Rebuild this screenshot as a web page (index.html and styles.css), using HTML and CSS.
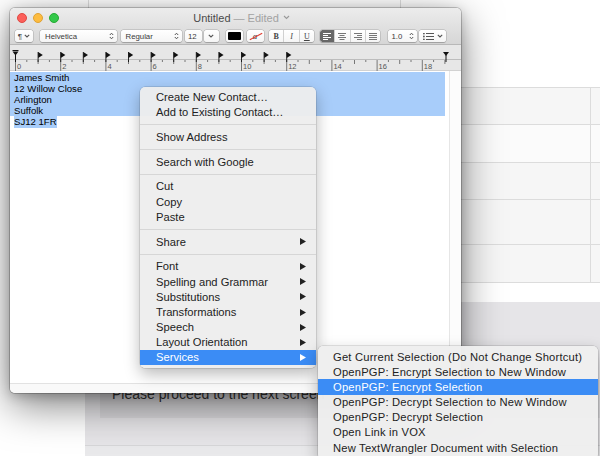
FILE: index.html
```html
<!DOCTYPE html>
<html>
<head>
<meta charset="utf-8">
<link rel="stylesheet" href="styles.css">
</head>
<body>
<div class="page">
  <div class="page-top"><div class="pt-a"></div><div class="pt-b"></div><div class="pt-c"></div></div>
  <div class="table">
    <div class="row h37 shade"><div class="cell"></div><div class="cell-end"></div></div>
    <div class="row h38"><div class="cell"></div><div class="cell-end"></div></div>
    <div class="row h37 shade"><div class="cell"></div><div class="cell-end"></div></div>
    <div class="row h45 shade"><div class="cell"></div><div class="cell-end"></div></div>
    <div class="row h38 shade"><div class="cell"></div><div class="cell-end"></div></div>
  </div>
  <div class="page-gap"></div>
  <div class="band">
    <div class="notice">Please proceed to the next screen</div>
    <div class="band-foot"></div>
  </div>
</div>

<div class="window">
  <div class="titlebar">
    <div class="title-row">
      <div class="lights"><span class="light red"></span><span class="light yellow"></span><span class="light green"></span></div>
      <div class="title">Untitled <span class="edited">— Edited</span> <svg class="tchev" width="7" height="5" viewBox="0 0 7 5"><path d="M1 1 L3.5 3.5 L6 1" fill="none" stroke="#9a9a9a" stroke-width="1.1"/></svg></div>
      <div></div>
    </div>
    <div class="toolbar">
      <div class="ctl para"><span class="pil">¶</span><svg width="6" height="4" viewBox="0 0 6 4"><path d="M0.8 0.8 L3 3 L5.2 0.8" fill="none" stroke="#555" stroke-width="1.1"/></svg></div>
      <div class="ctl popup font-pop"><span>Helvetica</span><svg width="5" height="8" viewBox="0 0 5 8"><path d="M0.8 3 L2.5 1.2 L4.2 3 M0.8 5 L2.5 6.8 L4.2 5" fill="none" stroke="#555" stroke-width="1"/></svg></div>
      <div class="ctl popup style-pop"><span>Regular</span><svg width="5" height="8" viewBox="0 0 5 8"><path d="M0.8 3 L2.5 1.2 L4.2 3 M0.8 5 L2.5 6.8 L4.2 5" fill="none" stroke="#555" stroke-width="1"/></svg></div>
      <div class="ctl size-field">12</div>
      <div class="ctl size-btn"><svg width="6" height="4" viewBox="0 0 6 4"><path d="M0.8 0.8 L3 3 L5.2 0.8" fill="none" stroke="#555" stroke-width="1.1"/></svg></div>
      <div class="ctl well"><span class="swatch"></span></div>
      <div class="ctl well hl"><span class="hl-a">a</span></div>
      <div class="ctl seg biu"><span class="sb">B</span><span class="si">I</span><span class="su">U</span></div>
      <div class="ctl seg align">
        <span class="on"><svg width="8" height="7" viewBox="0 0 8 7"><path d="M0 0.5 H8 M0 2.5 H5 M0 4.5 H8 M0 6.5 H5" stroke="#fff" stroke-width="1"/></svg></span>
        <span><svg width="8" height="7" viewBox="0 0 8 7"><path d="M0 0.5 H8 M1.5 2.5 H6.5 M0 4.5 H8 M1.5 6.5 H6.5" stroke="#777" stroke-width="1"/></svg></span>
        <span><svg width="8" height="7" viewBox="0 0 8 7"><path d="M0 0.5 H8 M3 2.5 H8 M0 4.5 H8 M3 6.5 H8" stroke="#777" stroke-width="1"/></svg></span>
        <span><svg width="8" height="7" viewBox="0 0 8 7"><path d="M0 0.5 H8 M0 2.5 H8 M0 4.5 H8 M0 6.5 H8" stroke="#777" stroke-width="1"/></svg></span>
      </div>
      <div class="ctl popup spacing"><span>1.0</span><svg width="5" height="8" viewBox="0 0 5 8"><path d="M0.8 3 L2.5 1.2 L4.2 3 M0.8 5 L2.5 6.8 L4.2 5" fill="none" stroke="#555" stroke-width="1"/></svg></div>
      <div class="ctl list-pop"><svg width="11" height="7" viewBox="0 0 11 7"><path d="M3 0.5 H11 M3 3.5 H11 M3 6.5 H11" stroke="#555" stroke-width="1"/><circle cx="0.9" cy="0.6" r="0.9" fill="#555"/><circle cx="0.9" cy="3.5" r="0.9" fill="#555"/><circle cx="0.9" cy="6.4" r="0.9" fill="#555"/></svg><svg width="6" height="4" viewBox="0 0 6 4"><path d="M0.8 0.8 L3 3 L5.2 0.8" fill="none" stroke="#555" stroke-width="1.1"/></svg></div>
    </div>
  </div>

  <svg class="ruler" width="451" height="26" viewBox="0 0 451 26">
    <rect x="0" y="0" width="451" height="26" fill="#e7e7e7"/>
    <line x1="0" y1="25.5" x2="451" y2="25.5" stroke="#d2d2d2"/>
    <line x1="0" y1="14.5" x2="451" y2="14.5" stroke="#bdbdbd"/>
    <g stroke="#777" stroke-width="1">
      <path d="M5.5 15 V26 M50.7 15 V26 M95.9 15 V26 M141.1 15 V26 M186.3 15 V26 M231.5 15 V26 M276.7 15 V26 M321.9 15 V26 M367.1 15 V26 M412.3 15 V26"/>
      <path d="M28.1 15 V19 M73.3 15 V19 M118.5 15 V19 M163.7 15 V19 M208.9 15 V19 M254.1 15 V19 M299.3 15 V19 M344.5 15 V19 M389.7 15 V19 M434.9 15 V19"/>
      <path d="M16.8 15 V17 M39.4 15 V17 M62 15 V17 M84.6 15 V17 M107.2 15 V17 M129.8 15 V17 M152.4 15 V17 M175 15 V17 M197.6 15 V17 M220.2 15 V17 M242.8 15 V17 M265.4 15 V17 M288 15 V17 M310.6 15 V17 M333.2 15 V17 M355.8 15 V17 M378.4 15 V17 M401 15 V17 M423.6 15 V17"/>
    </g>
    <g font-family="Liberation Sans, Arial, sans-serif" font-size="7.5" fill="#555">
      <text x="7" y="24">0</text><text x="52.2" y="24">2</text><text x="97.4" y="24">4</text><text x="142.6" y="24">6</text><text x="187.8" y="24">8</text><text x="233" y="24">10</text><text x="278.2" y="24">12</text><text x="323.4" y="24">14</text><text x="368.6" y="24">16</text><text x="413.8" y="24">18</text>
    </g>
    <g fill="#111" stroke="#111" stroke-width="1">
      <path d="M2.5 5.5 H8.5" />
      <polygon points="2.5,6.5 8.5,6.5 5.5,10.5" stroke="none"/>
      <path d="M5.5 10 V17"/>
      <polygon points="433,7 439,7 436,11" stroke="none"/>
      <path d="M436 10 V17"/>
    </g>
    <g fill="#111">
      <polygon points="28.1,7 32.8,10 28.1,13"/><polygon points="50.7,7 55.4,10 50.7,13"/><polygon points="73.3,7 78,10 73.3,13"/><polygon points="95.9,7 100.6,10 95.9,13"/><polygon points="118.5,7 123.2,10 118.5,13"/><polygon points="141.1,7 145.8,10 141.1,13"/><polygon points="163.7,7 168.4,10 163.7,13"/><polygon points="186.3,7 191,10 186.3,13"/><polygon points="208.9,7 213.6,10 208.9,13"/><polygon points="231.5,7 236.2,10 231.5,13"/><polygon points="254.1,7 258.8,10 254.1,13"/><polygon points="276.7,7 281.4,10 276.7,13"/>
    </g>
    <g stroke="#111" stroke-width="0.9">
      <path d="M28.1 7 V17 M50.7 7 V17 M73.3 7 V17 M95.9 7 V17 M118.5 7 V17 M141.1 7 V17 M163.7 7 V17 M186.3 7 V17 M208.9 7 V17 M231.5 7 V17 M254.1 7 V17 M276.7 7 V17"/>
    </g>
  </svg>

  <div class="content">
    <div class="doc">
      <div class="line full">James Smith</div>
      <div class="line full">12 Willow Close</div>
      <div class="line full">Arlington</div>
      <div class="line full">Suffolk</div>
      <div class="line"><span class="sel">SJ12 1FR</span></div>
    </div>
    <div class="gutter"></div>
  </div>
  <div class="hscroll"></div>
</div>

<div class="menu">
  <div class="mi">Create New Contact…</div>
  <div class="mi">Add to Existing Contact…</div>
  <div class="sep"></div>
  <div class="mi">Show Address</div>
  <div class="sep"></div>
  <div class="mi">Search with Google</div>
  <div class="sep"></div>
  <div class="mi">Cut</div>
  <div class="mi">Copy</div>
  <div class="mi">Paste</div>
  <div class="sep"></div>
  <div class="mi">Share<svg class="arr" width="6" height="7" viewBox="0 0 6 7"><polygon points="0,0 6,3.5 0,7"/></svg></div>
  <div class="sep"></div>
  <div class="mi">Font<svg class="arr" width="6" height="7" viewBox="0 0 6 7"><polygon points="0,0 6,3.5 0,7"/></svg></div>
  <div class="mi">Spelling and Grammar<svg class="arr" width="6" height="7" viewBox="0 0 6 7"><polygon points="0,0 6,3.5 0,7"/></svg></div>
  <div class="mi">Substitutions<svg class="arr" width="6" height="7" viewBox="0 0 6 7"><polygon points="0,0 6,3.5 0,7"/></svg></div>
  <div class="mi">Transformations<svg class="arr" width="6" height="7" viewBox="0 0 6 7"><polygon points="0,0 6,3.5 0,7"/></svg></div>
  <div class="mi">Speech<svg class="arr" width="6" height="7" viewBox="0 0 6 7"><polygon points="0,0 6,3.5 0,7"/></svg></div>
  <div class="mi">Layout Orientation<svg class="arr" width="6" height="7" viewBox="0 0 6 7"><polygon points="0,0 6,3.5 0,7"/></svg></div>
  <div class="mi active">Services<svg class="arr" width="6" height="7" viewBox="0 0 6 7"><polygon points="0,0 6,3.5 0,7"/></svg></div>
</div>

<div class="submenu">
  <div class="mi">Get Current Selection (Do Not Change Shortcut)</div>
  <div class="mi">OpenPGP: Encrypt Selection to New Window</div>
  <div class="mi active">OpenPGP: Encrypt Selection</div>
  <div class="mi">OpenPGP: Decrypt Selection to New Window</div>
  <div class="mi">OpenPGP: Decrypt Selection</div>
  <div class="mi">Open Link in VOX</div>
  <div class="mi">New TextWrangler Document with Selection</div>
</div>
</body>
</html>
```

FILE: styles.css
```css
html, body {
  margin: 0;
  padding: 0;
}
body {
  width: 600px;
  height: 456px;
  overflow: hidden;
  position: relative;
  background: #fff;
  font-family: "Liberation Sans", Arial, sans-serif;
}

/* background page */
.page {
  position: absolute;
  inset: 0;
  display: flex;
  flex-direction: column;
}
.page-top {
  height: 87px;
  display: flex;
  flex: none;
}
.pt-a { width: 88px; }
.pt-b { width: 311px; border-left: 1px solid #dedede; }
.pt-c { flex: 1; border-left: 1px solid #dedede; }
.table {
  margin-left: 85px;
  border-top: 1px solid #dcdcdc;
  flex: none;
}
.row {
  display: flex;
  box-sizing: border-box;
  border-bottom: 1px solid #dcdcdc;
  background: #fbfbfb;
}
.row.shade { background: #f6f6f6; }
.h37 { height: 37px; }
.h38 { height: 38px; }
.h45 { height: 45px; }
.cell { flex: 1; border-right: 1px solid #dcdcdc; }
.cell-end { width: 9px; }
.page-gap { height: 19px; flex: none; }
.band {
  flex: 1;
  margin-left: 85px;
  background: #e6e5e8;
  display: flex;
  flex-direction: column;
}
.notice {
  margin: 78px 0 0 15px;
  height: 38px;
  box-sizing: border-box;
  width: 500px;
  padding: 5px 12px 0;
  line-height: 18px;
  font-size: 14px;
  color: #333;
  background: #dad9dc;
}
.band-foot {
  margin-top: 27px;
  flex: 1;
  border-top: 1px solid #d6d6d8;
  background: #e9e9eb;
}

/* window */
.window {
  position: absolute;
  left: 10px;
  top: 8px;
  width: 451px;
  height: 385px;
  border-radius: 5px;
  background: #fff;
  overflow: hidden;
  display: flex;
  flex-direction: column;
  box-shadow: 0 0 0 1px rgba(0,0,0,0.2), 0 12px 40px rgba(0,0,0,0.5), 0 3px 12px rgba(0,0,0,0.22);
}
.titlebar {
  height: 37px;
  flex: none;
  box-sizing: border-box;
  background: linear-gradient(#ececec, #d6d6d6);
  border-bottom: 1px solid #b8b8b8;
}
.title-row {
  height: 19px;
  display: grid;
  grid-template-columns: 1fr auto 1fr;
  align-items: center;
}
.lights {
  display: flex;
  gap: 6px;
  padding-left: 7px;
}
.light {
  width: 10px;
  height: 10px;
  border-radius: 50%;
  box-sizing: border-box;
}
.red { background: #fc605b; border: 0.5px solid #de4a44; }
.yellow { background: #fdbc40; border: 0.5px solid #dea236; }
.green { background: #34c84a; border: 0.5px solid #27aa35; }
.title {
  font-size: 11px;
  color: #4a4a4a;
  padding-left: 12px;
  white-space: nowrap;
  display: flex;
  align-items: center;
  gap: 3px;
}
.edited { color: #a2a2a2; }
.tchev { margin-left: 1px; }

.toolbar {
  height: 18px;
  display: flex;
  align-items: center;
  padding-left: 5px;
}
.ctl {
  height: 12px;
  box-sizing: border-box;
  background: linear-gradient(#ffffff, #f5f5f5);
  border-radius: 2.5px;
  box-shadow: 0 0 0 0.5px rgba(0,0,0,0.2), 0 0.5px 1px rgba(0,0,0,0.18);
  display: flex;
  align-items: center;
  font-size: 7.8px;
  color: #3a3a3a;
  flex: none;
}
.para { width: 18px; justify-content: center; gap: 2px; }
.pil { font-size: 8px; color: #444; }
.popup { justify-content: space-between; padding: 0 3px 0 5px; }
.font-pop { width: 77px; margin-left: 7px; }
.style-pop { width: 61px; margin-left: 3.5px; }
.size-field { width: 17px; margin-left: 3.5px; padding-left: 3px; }
.size-btn { width: 15px; margin-left: 1.5px; justify-content: center; }
.well { width: 17px; margin-left: 7.5px; justify-content: center; }
.swatch { width: 13px; height: 8px; background: #000; border-radius: 1px; }
.hl { margin-left: 3.5px; }
.hl-a {
  position: relative;
  font-size: 9px;
  font-family: "Liberation Serif", serif;
  font-style: italic;
  color: #333;
  line-height: 9px;
}
.hl-a::after {
  content: "";
  position: absolute;
  left: -4px;
  top: 4px;
  width: 14px;
  height: 1px;
  background: #e03a2e;
  transform: rotate(-28deg);
}
.seg { padding: 0; }
.seg > span {
  flex: 1;
  height: 100%;
  display: flex;
  align-items: center;
  justify-content: center;
  border-left: 0.5px solid #d0d0d0;
}
.seg > span:first-child { border-left: none; }
.biu { width: 45px; margin-left: 5.5px; font-family: "Liberation Serif", serif; font-size: 8px; color: #444; }
.sb { font-weight: bold; }
.si { font-style: italic; }
.su { text-decoration: underline; }
.align { width: 60px; margin-left: 6px; overflow: hidden; }
.align .on { background: #676767; border-radius: 2.5px 0 0 2.5px; }
.spacing { width: 29px; margin-left: 7.5px; padding-left: 4px; }
.list-pop { width: 27px; margin-left: 2.5px; justify-content: center; gap: 3px; }

.ruler { display: block; flex: none; }

.content {
  flex: 1;
  display: flex;
  min-height: 0;
}
.doc {
  flex: 1;
  padding: 0.7px 4px 0 0;
  font-size: 9.6px;
  line-height: 11.2px;
  color: #000;
}
.line {
  height: 11.2px;
  padding-left: 4px;
  white-space: nowrap;
}
.line.full { background: #a8cdfa; }
.sel { background: #a8cdfa; display: inline-block; height: 11.2px; }
.gutter {
  width: 12px;
  box-sizing: border-box;
  border-left: 1px solid #e6e6e6;
  background: #fcfcfc;
}
.hscroll {
  height: 10px;
  flex: none;
  box-sizing: border-box;
  border-top: 1px solid #e2e2e2;
  background: #f9f9f9;
}

/* menus */
.menu, .submenu {
  position: absolute;
  background: rgba(237,237,237,0.95);
  border-radius: 5px;
  box-shadow: 0 0 0 0.5px rgba(0,0,0,0.2), 0 6px 16px rgba(0,0,0,0.28);
  font-size: 11.2px;
  color: #222;
}
.menu {
  left: 140px;
  top: 87px;
  width: 176px;
  padding: 2.4px 0 3px;
}
.submenu {
  left: 318px;
  top: 346px;
  width: 280px;
  padding: 3px 0 4px;
  background: rgba(238,238,238,0.97);
  letter-spacing: 0.2px;
}
.mi {
  height: 15.2px;
  line-height: 15.2px;
  padding: 1px 10px 0 16px;
  box-sizing: border-box;
  display: flex;
  justify-content: space-between;
  align-items: center;
  white-space: nowrap;
}
.submenu .mi { padding-left: 15px; }
.arr { fill: #222; margin-top: -1px; }
.mi.active { background: #3b8cf5; color: #fff; }
.mi.active .arr { fill: #fff; }
.sep {
  height: 1px;
  margin: 4.3px 0;
  background: #d6d6d6;
}
```
